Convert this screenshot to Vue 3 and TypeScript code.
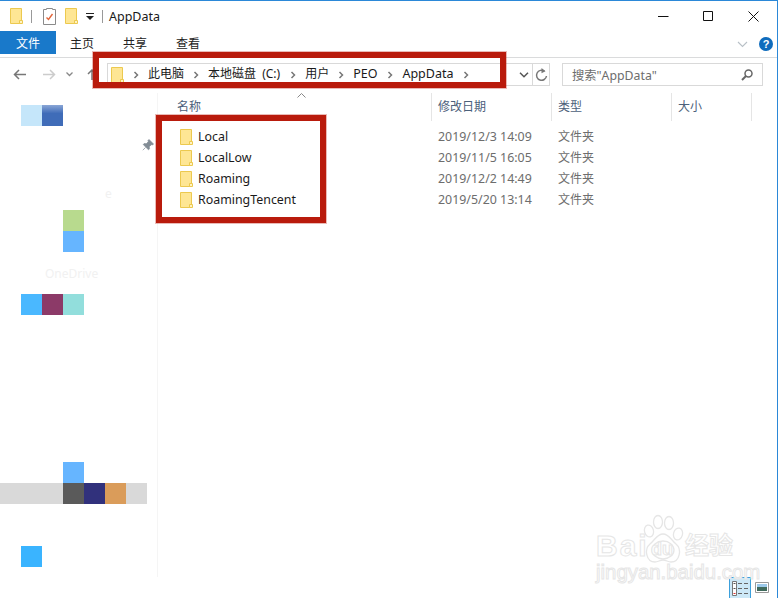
<script setup lang="ts">
interface Cell { col: number; row: number; span?: number; color: string }
const cells: Cell[] = [
  { col: 1, row: 0, color: '#c5e6fa' },
  { col: 2, row: 0, color: 'linear-gradient(#8aa6d6 0, #3f6cb8 40%)' },
  { col: 3, row: 5, color: '#b8da8e' },
  { col: 3, row: 6, color: '#66b5ff' },
  { col: 1, row: 9, color: '#4ab8ff' },
  { col: 2, row: 9, color: '#8c3a68' },
  { col: 3, row: 9, color: '#92dedc' },
  { col: 3, row: 17, color: '#66b5ff' },
  { col: 0, row: 18, span: 3, color: '#d9d9d9' },
  { col: 3, row: 18, color: '#5a5a5a' },
  { col: 4, row: 18, color: '#31317c' },
  { col: 5, row: 18, color: '#da9c5a' },
  { col: 6, row: 18, color: '#d9d9d9' },
  { col: 1, row: 21, color: '#3ab4ff' },
]
const cellStyle = (c: Cell) => ({
  gridColumn: `${c.col + 1} / span ${c.span ?? 1}`,
  gridRow: `${c.row + 1}`,
  background: c.color,
})
const crumbs = [
  { text: '此电脑', latin: false },
  { text: '本地磁盘 (C:)', latin: false },
  { text: '用户', latin: false },
  { text: 'PEO', latin: true },
  { text: 'AppData', latin: true },
]
const tabs = ['主页', '共享', '查看']
const rows = [
  { name: 'Local', date: '2019/12/3 14:09' },
  { name: 'LocalLow', date: '2019/11/5 16:05' },
  { name: 'Roaming', date: '2019/12/2 14:49' },
  { name: 'RoamingTencent', date: '2019/5/20 13:14' },
]
</script>

<template>
  <div class="window">
    <svg class="defs" width="0" height="0">
      <symbol id="folder" viewBox="0 0 13 16">
        <path d="M.5.5h11v15H.5z" fill="#fee694" stroke="#ecc94f" />
        <path d="M9.5 15.5v-3h3v3z" fill="#fff3c4" stroke="#ecc94f" />
      </symbol>
      <symbol id="chev" viewBox="0 0 6 8">
        <path d="M1.5 1l3 3-3 3" fill="none" stroke="#777" stroke-width="1.5" />
      </symbol>
    </svg>

    <header class="titlebar">
      <svg class="folder"><use href="#folder" /></svg>
      <span class="tsep first"></span>
      <svg class="clip" width="13" height="17" viewBox="0 0 13 17">
        <path d="M.5 1.500h3V.5h6v1h3v15H.5z" fill="#fff" stroke="#8a8a8a" />
        <path d="M3.500 9.500l2 2L9.500 6" fill="none" stroke="#e2653a" stroke-width="1.400" />
      </svg>
      <svg class="folder second"><use href="#folder" /></svg>
      <svg class="drop" width="8" height="7" viewBox="0 0 8 7">
        <path d="M0 0h8v1H0zM0 3h8L4 7z" fill="#222" />
      </svg>
      <span class="tsep"></span>
      <span class="title">AppData</span>
      <div class="controls">
        <svg width="11" height="11" viewBox="0 0 11 11"><path d="M0 5.500h10.500" stroke="#111" /></svg>
        <svg width="11" height="11" viewBox="0 0 11 11"><path d="M.5.500h9v9h-9z" fill="none" stroke="#111" /></svg>
        <svg width="11" height="11" viewBox="0 0 11 11"><path d="M.5.500l10 10M10.500.500l-10 10" stroke="#111" /></svg>
      </div>
    </header>

    <nav class="ribbon">
      <span class="file">文件</span>
      <span v-for="t in tabs" :key="t" class="tab">{{ t }}</span>
      <svg class="collapse" width="11" height="7" viewBox="0 0 11 7">
        <path d="M1 1l4.500 4.500L10 1" fill="none" stroke="#b8c0c7" stroke-width="1.100" />
      </svg>
      <span class="help">?</span>
    </nav>

    <div class="navbar">
      <svg width="13" height="11" viewBox="0 0 13 11" class="back">
        <path d="M6 1L1.500 5.500 6 10M1.500 5.500H13" fill="none" stroke="#777" stroke-width="1.500" />
      </svg>
      <svg width="13" height="11" viewBox="0 0 13 11" class="forward">
        <path d="M7 1l4.500 4.500L7 10M11.500 5.500H0" fill="none" stroke="#ccc" stroke-width="1.500" />
      </svg>
      <svg width="7" height="5" viewBox="0 0 7 5" class="recent">
        <path d="M.5.500l3 3 3-3" fill="none" stroke="#888" stroke-width="1.300" />
      </svg>
      <svg width="10" height="11" viewBox="0 0 10 11" class="up">
        <path d="M1 5l4-4 4 4M5 1v10" fill="none" stroke="#777" stroke-width="1.500" />
      </svg>
      <div class="address">
        <svg class="folder small"><use href="#folder" /></svg>
        <template v-for="c in crumbs" :key="c.text">
          <svg class="chev" width="6" height="8"><use href="#chev" /></svg>
          <span class="crumb" :class="{ latin: c.latin }">{{ c.text }}</span>
        </template>
        <svg class="chev" width="6" height="8"><use href="#chev" /></svg>
        <svg class="addr-drop" width="10" height="6" viewBox="0 0 10 6">
          <path d="M1 .700l4 4 4-4" fill="none" stroke="#555" stroke-width="1.500" />
        </svg>
      </div>
      <div class="refresh">
        <svg width="13" height="14" viewBox="0 0 13 14">
          <path d="M9.500 3.200A5 5 0 1 0 11.500 8" fill="none" stroke="#777" stroke-width="1.500" />
          <path d="M6.500 0l4 3.300-4 2z" fill="#777" />
        </svg>
      </div>
      <div class="search">
        <span>搜索"AppData"</span>
        <svg width="12" height="12" viewBox="0 0 12 12">
          <circle cx="7.500" cy="4.500" r="3.500" fill="none" stroke="#666" stroke-width="1.500" />
          <path d="M5 7l-4 4" stroke="#666" stroke-width="2" />
        </svg>
      </div>
    </div>

    <main class="body">
      <aside class="side">
        <span v-for="(c, i) in cells" :key="i" :style="cellStyle(c)"></span>
        <span class="ghost ghost-e">e</span>
        <span class="ghost ghost-drive">OneDrive</span>
        <svg class="pin" width="12" height="12" viewBox="0 0 12 12">
          <path d="M7 .5L11.500 5l-1 1-1.200-.3L7.200 7.800l.3 2-1 1L1.200 5.500l1-1 2 .3 2.100-2.100L6 1.500zM3.500 8.500L.8 11.200" fill="#828c95" stroke="#828c95" stroke-width=".7" />
        </svg>
      </aside>
      <section class="list">
        <svg class="sort" width="9" height="5" viewBox="0 0 9 5">
          <path d="M.5 4.500l4-4 4 4" fill="none" stroke="#888" />
        </svg>
        <div class="head row">
          <span>名称</span><span>修改日期</span><span>类型</span><span>大小</span>
        </div>
        <div v-for="r in rows" :key="r.name" class="row item">
          <span class="name"><svg class="folder"><use href="#folder" /></svg>{{ r.name }}</span>
          <span class="muted date">{{ r.date }}</span>
          <span class="muted">文件夹</span>
          <span></span>
        </div>
      </section>
    </main>

    <footer class="status">
      <span class="view active">
        <svg width="16" height="15" viewBox="0 0 16 15">
          <path d="M.5.500h4v14h-4z" fill="#fff" stroke="#777" />
          <path d="M1.500 2.500h2M1.500 7.500h2" stroke="#555" />
          <path d="M1.500 12.500h2" stroke="#d33" />
          <path d="M6 2.500h4M12 2.500h4M6 7.500h4M12 7.500h4M6 12.500h4M12 12.500h4" stroke="#666" />
        </svg>
      </span>
      <span class="view">
        <svg width="14" height="11" viewBox="0 0 14 11">
          <path d="M.5.500h13v10H.5z" fill="#fff" stroke="#999" />
          <path d="M2 2h10v3H2z" fill="#9cc9ea" />
          <path d="M2 5h10v4H2z" fill="#3f6a5c" />
        </svg>
      </span>
    </footer>

    <div class="mark addr-mark"></div>
    <div class="mark list-mark"></div>

    <div class="watermark">
      <svg class="paw" width="44" height="50" viewBox="0 0 44 50">
        <g fill="#fff" stroke="#e6e6e6" stroke-width="1.300">
          <ellipse cx="6" cy="17" rx="4.500" ry="6" transform="rotate(-15 6 17)" />
          <ellipse cx="15" cy="8" rx="4.500" ry="6.500" />
          <ellipse cx="26" cy="9" rx="4.500" ry="6.500" />
          <ellipse cx="35" cy="20" rx="4.500" ry="6" transform="rotate(15 35 20)" />
          <path d="M20 20c6 0 8 6 13 10 6 5 4 18-5 18-3 0-5-2-8-2s-5 2-8 2C3 48 1 35 7 30c5-4 7-10 13-10z" />
          <ellipse cx="20" cy="36" rx="11" ry="9" />
        </g>
      </svg>
      <span class="wm bai">Bai</span>
      <span class="wm du">du</span>
      <span class="wm jy">经验</span>
      <span class="wm url">jingyan.baidu.com</span>
    </div>
  </div>
</template>

<style scoped>
.window {
  position: relative;
  width: 778px;
  height: 598px;
  box-sizing: border-box;
  border-top: 1px solid #2b88d8;
  border-right: 1px solid #2b88d8;
  background: #fff;
  overflow: hidden;
  display: flex;
  flex-direction: column;
  font-family: "Noto Sans", "Noto Sans CJK SC", sans-serif;
  font-size: 12px;
  color: #1a1a1a;
}
.defs { position: absolute; }
.folder { width: 13px; height: 16px; flex: none; }
.titlebar {
  height: 30px;
  display: flex;
  align-items: center;
  padding-left: 10px;
}
.tsep { width: 1px; height: 13px; background: #999; margin-left: 8px; }
.tsep.first { margin: 0 11px 0 8px; }
.clip { flex: none; }
.folder.second { margin-left: 9px; }
.drop { margin-left: 8px; }
.title { margin-left: 6px; font-size: 12.500px; }
.controls {
  margin-left: auto;
  display: flex;
  gap: 34px;
  margin-right: 18px;
}
.ribbon {
  height: 26px;
  display: flex;
  align-items: flex-start;
  border-bottom: 1px solid #dadbdc;
  box-sizing: content-box;
}
.file {
  width: 56px;
  height: 23px;
  line-height: 25px;
  text-align: center;
  background: #1979ca;
  color: #fff;
  margin-right: 14px;
}
.tab { width: 53px; line-height: 26px; color: #222; }
.collapse { margin: 10px 0 0 auto; }
.help {
  width: 14px;
  height: 14px;
  margin: 6px 4px 0 11px;
  border-radius: 50%;
  background: #0f6cbd;
  color: #fff;
  font: bold 11px/14px "Liberation Sans", sans-serif;
  text-align: center;
}
.navbar {
  height: 35px;
  display: flex;
  align-items: flex-start;
  padding: 5px 0 0 13px;
  box-sizing: border-box;
}
.back { margin-top: 6px; }
.forward { margin: 6px 0 0 17px; }
.recent { margin: 9px 0 0 10px; }
.up { margin: 6px 0 0 14px; }
.address {
  width: 425px;
  height: 23px;
  margin-left: 10px;
  box-sizing: border-box;
  border: 1px solid #d9d9d9;
  border-right: 0;
  display: flex;
  align-items: center;
  padding-left: 3px;
  color: #1a1a1a;
}
.folder.small { margin-right: 9px; }
.chev { flex: none; }
.crumb { margin: 0 9px; white-space: nowrap; word-spacing: 3px; line-height: 20px; padding-bottom: 1px; }
.crumb:nth-of-type(2) { margin-right: 10px; }
.crumb.latin { font-size: 12.500px; margin-right: 10px; }
.addr-drop { margin-left: auto; margin-right: 3px; }
.refresh {
  width: 18px;
  height: 23px;
  box-sizing: border-box;
  border: 1px solid #d9d9d9;
  display: flex;
  align-items: center;
  justify-content: center;
}
.search {
  width: 201px;
  height: 23px;
  margin-left: 12px;
  box-sizing: border-box;
  border: 1px solid #d9d9d9;
  display: flex;
  align-items: center;
  justify-content: space-between;
  padding: 0 9px;
  color: #6d6d6d;
  font-size: 12.300px;
}
.body { flex: 1; display: flex; min-height: 0; }
.side {
  position: relative;
  width: 158px;
  flex: none;
  box-sizing: border-box;
  padding-top: 12px;
  border-right: 1px solid #f5f5f5;
  display: grid;
  grid-template-columns: repeat(7, 21px);
  grid-auto-rows: 21px;
}
.ghost { color: #f1f1f1; white-space: nowrap; line-height: 21px; }
.ghost-e { grid-column: 6; grid-row: 5; margin-top: -6px; }
.ghost-drive { grid-column: 3 / span 3; grid-row: 9; margin: -10px 0 0 3px; }
.pin { position: absolute; left: 142px; top: 46px; }
.list { position: relative; flex: 1; }
.sort { position: absolute; left: 139px; top: 0; }
.row {
  display: grid;
  grid-template-columns: 274px 120px 120px 80px;
}
.head { height: 25px; color: #4c607a; }
.head span {
  padding-left: 6px;
  line-height: 27px;
  border-right: 1px solid #e5e5e5;
  height: 28px;
}
.head span:first-child { padding-left: 19px; }
.item { height: 21px; line-height: 21px; }
.head + .item { margin-top: 8px; }
.item .folder { margin-right: 5px; }
.name { display: flex; align-items: center; padding-left: 22px; font-size: 12.400px; }
.muted { padding-left: 6px; color: #6d6d6d; }
.date { font-size: 12.400px; }
.status {
  height: 21px;
  display: flex;
  justify-content: flex-end;
  align-items: center;
  padding-right: 8px;
  gap: 4px;
}
.view { display: flex; align-items: center; justify-content: center; }
.view.active {
  width: 22px;
  height: 21px;
  box-sizing: border-box;
  background: #cce8f7;
  border: 1px solid #3ca0dc;
  border-bottom: 0;
}
.mark {
  position: absolute;
  box-sizing: border-box;
  border: 6px solid #b91b0c;
  box-shadow: 0 0 0 1px rgba(185, 27, 12, .3);
}
.addr-mark { left: 93px; top: 51px; width: 413px; height: 36px; }
.list-mark { left: 156px; top: 114px; width: 170px; height: 108px; }
.watermark {
  position: absolute;
  left: 596px;
  top: 513px;
  width: 140px;
  height: 70px;
  pointer-events: none;
}
.paw { position: absolute; left: 47px; top: 0; }
.wm {
  position: absolute;
  color: #fff;
  -webkit-text-stroke: 1px #e6e6e6;
  font-family: "Liberation Sans", "Noto Sans CJK SC", sans-serif;
  font-weight: bold;
  white-space: nowrap;
}
.bai { left: 0; top: 15px; font-size: 30px; line-height: 34px; letter-spacing: 2px; }
.du { left: 55px; top: 24px; font-size: 18px; line-height: 22px; }
.jy { left: 89px; top: 18px; font-size: 24px; line-height: 28px; }
.url { left: 0; top: 47px; font-size: 20.400px; line-height: 22px; font-weight: normal; }
</style>
